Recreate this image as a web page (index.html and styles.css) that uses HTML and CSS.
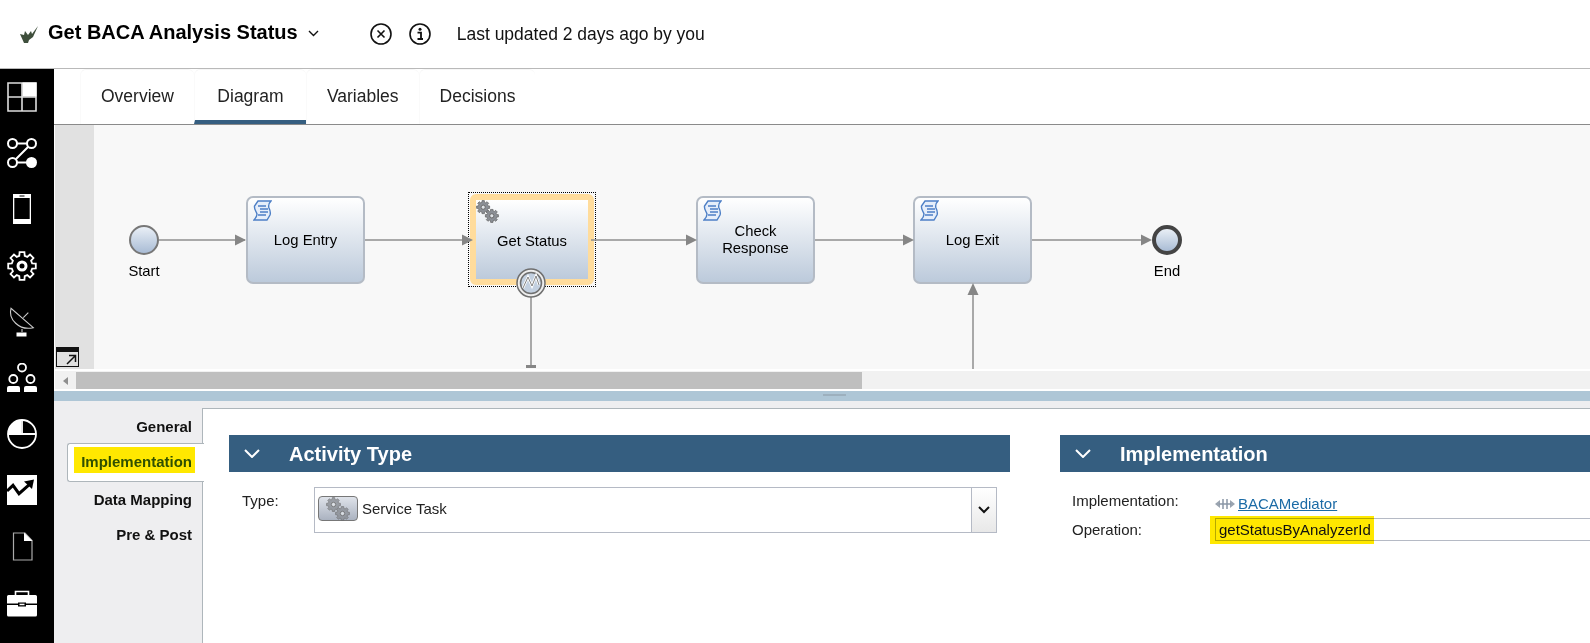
FILE: index.html
```html
<!DOCTYPE html>
<html lang="en">

<head>
    <meta charset="UTF-8">
    <title>Get BACA Analysis Status</title>
    <link rel="stylesheet" href="styles.css">
</head>

<body>
    <svg class="defs" width="0" height="0">
        <symbol id="gear" viewBox="0 0 30 30">
            <polygon points="25.14,12.28 28.79,12.57 28.79,17.43 25.14,17.72 24.09,20.25 26.47,23.03 23.03,26.47 20.25,24.09 17.72,25.14 17.43,28.79 12.57,28.79 12.28,25.14 9.75,24.09 6.97,26.47 3.53,23.03 5.91,20.25 4.86,17.72 1.21,17.43 1.21,12.57 4.86,12.28 5.91,9.75 3.53,6.97 6.97,3.53 9.75,5.91 12.28,4.86 12.57,1.21 17.43,1.21 17.72,4.86 20.25,5.91 23.03,3.53 26.47,6.97 24.09,9.75" />
        </symbol>
        <symbol id="gears" viewBox="0 0 24 24">
            <use href="#gear" x="0" y="0" width="15" height="15" fill="#8b8f96" stroke="#666" stroke-width="1.5" />
            <circle cx="7.5" cy="7.5" r="2.2" fill="#dfe3e8" stroke="#666" />
            <use href="#gear" x="9" y="9" width="15" height="15" fill="#8b8f96" stroke="#666" stroke-width="1.5" />
            <circle cx="16.5" cy="16.5" r="2.2" fill="#dfe3e8" stroke="#666" />
        </symbol>
        <symbol id="script" viewBox="0 0 19 21">
            <path d="M5 1H18C16 3 15 5 16 8C17 10 18 12 17 15L14 20H1C3 18 4 16 4 14C3 11 1 9 1.5 6Z" fill="#e6eefa" stroke="#4d7fc6" stroke-width="1.4" />
            <path d="M5 6H13M7 9H15M7 12H15M5 15H13" stroke="#4d7fc6" stroke-width="1.3" />
        </symbol>
    </svg>

    <header class="topbar">
        <svg class="app-logo" width="21" height="19" viewBox="0 0 21 19">
            <path d="M6 18L2 9L6 10L7 6L10 10L13 6L14 9L20 1L15 12L11 15L10 18Z" fill="#3f4f3c" />
        </svg>
        <h1 class="app-title">Get BACA Analysis Status</h1>
        <svg class="title-caret" width="11" height="7" viewBox="0 0 11 7">
            <path d="M1 1L5.500 5.500L10 1" fill="none" stroke="#111" stroke-width="1.4" />
        </svg>
        <svg class="round-icon first" width="22" height="22" viewBox="0 0 22 22">
            <circle cx="11" cy="11" r="10" fill="none" stroke="#111" stroke-width="1.6" />
            <path d="M7.5 7.5L14.5 14.5M14.5 7.5L7.5 14.5" stroke="#111" stroke-width="1.6" />
        </svg>
        <svg class="round-icon" width="22" height="22" viewBox="0 0 22 22">
            <circle cx="11" cy="11" r="10" fill="none" stroke="#111" stroke-width="1.6" />
            <circle cx="11" cy="6.3" r="1.5" fill="#111" />
            <path d="M8.5 9.6H12V15.8M8.5 16H14" fill="none" stroke="#111" stroke-width="1.8" />
        </svg>
        <span class="updated">Last updated 2 days ago by you</span>
    </header>

    <div class="shell">
        <nav class="rail">
            <svg class="rail-icon" viewBox="0 0 30 30">
                <path d="M1 1H29V29H1ZM15 1V29M1 15H29" fill="none" stroke="#ddd" stroke-width="1.6" />
                <rect x="15.500" y="0.500" width="14" height="14" fill="#fff" />
            </svg>
            <svg class="rail-icon" viewBox="0 0 30 30">
                <g fill="none" stroke="#fff" stroke-width="2">
                    <circle cx="5.500" cy="5.500" r="4.500" />
                    <circle cx="24.500" cy="5.500" r="4.500" />
                    <circle cx="5.500" cy="24.500" r="4.500" />
                    <path d="M10 5.500H20M21 9L9 21M10 24.500H20" />
                </g>
                <circle cx="24.500" cy="24.500" r="5.500" fill="#fff" />
            </svg>
            <svg class="rail-icon" viewBox="0 0 30 30">
                <path fill="#fff" fill-rule="evenodd" d="M6 0H24V30H6ZM7.300 4V25H22.700V4Z" />
                <rect x="12.500" y="1.500" width="5" height="1" fill="#000" />
            </svg>
            <svg class="rail-icon" viewBox="0 0 30 30">
                <use href="#gear" width="30" height="30" fill="none" stroke="#fff" stroke-width="1.8" />
                <circle cx="15" cy="15" r="4" fill="none" stroke="#fff" stroke-width="3" />
            </svg>
            <svg class="rail-icon" viewBox="0 0 30 30">
                <path d="M4 1.300C1 12 12 24 26.300 20.700Z" fill="none" stroke="#ccc" stroke-width="1.100" />
                <path d="M16.300 10.700L21.300 5.700" stroke="#ccc" stroke-width="1.100" />
                <path d="M15 22V25" stroke="#ccc" stroke-width="1.100" />
                <rect x="9.500" y="25.500" width="10" height="4" fill="#fff" />
            </svg>
            <svg class="rail-icon" viewBox="0 0 30 30">
                <g fill="none" stroke="#fff" stroke-width="1.8">
                    <circle cx="15" cy="4.500" r="4" />
                    <circle cx="6.300" cy="16" r="4" />
                    <circle cx="23.500" cy="16" r="4" />
                </g>
                <path d="M0 29V25Q0 23 2 23H11Q13 23 13 25V29ZM17 29V25Q17 23 19 23H28Q30 23 30 25V29Z" fill="#fff" />
            </svg>
            <svg class="rail-icon" viewBox="0 0 30 30">
                <circle cx="15" cy="15" r="14" fill="none" stroke="#fff" stroke-width="1.8" />
                <path d="M1 15H29M15 15V1" stroke="#fff" stroke-width="1.8" />
                <path d="M14 14V1.040A14 14 0 0 0 1.040 14Z" fill="#fff" />
            </svg>
            <svg class="rail-icon" viewBox="0 0 30 30">
                <rect width="30" height="30" fill="#fff" />
                <path d="M0 16L6 10.300L12 18.700L22 9.800" fill="none" stroke="#000" stroke-width="3" />
                <polygon points="27,4.500 17,6.500 25,14" fill="#000" />
            </svg>
            <svg class="rail-icon" viewBox="0 0 30 30">
                <path d="M6.500 1H18L25 8.500V28H6.500Z" fill="none" stroke="#aaa" stroke-width="1.200" />
                <polygon points="17,0.500 25.500,9 17,9" fill="#fff" />
            </svg>
            <svg class="rail-icon" viewBox="0 -1 30 30">
                <path d="M8.500 6V2.500H21.500V6" fill="none" stroke="#fff" stroke-width="1.600" />
                <path d="M1.500 6H28.500Q30 6 30 7.500V14.500H0V7.500Q0 6 1.500 6ZM0 16H30V26Q30 27.500 28.500 27.500H1.500Q0 27.500 0 26Z" fill="#fff" />
                <rect x="11" y="13.500" width="8" height="4" fill="#000" />
                <rect x="12.500" y="14.700" width="5" height="1.500" fill="#fff" />
            </svg>
        </nav>

        <main class="workspace">
            <div class="tabs">
                <a class="tab">Overview</a>
                <a class="tab tab-active">Diagram</a>
                <a class="tab">Variables</a>
                <a class="tab">Decisions</a>
            </div>

            <section class="canvas">
                <div class="canvas-gutter"></div>

                <svg class="wires" width="1535" height="244" viewBox="0 0 1535 244">
                    <g stroke="#8f8f8f" stroke-width="1.5" fill="none">
                        <path d="M104 115H190M310 115H410M536 115H632M760 115H850M977 115H1090" />
                        <path d="M476 172V242M918 170V244" />
                    </g>
                    <g fill="#868686">
                        <polygon points="180,109.500 191,115 180,120.500" />
                        <polygon points="407,109.500 418,115 407,120.500" />
                        <polygon points="631,109.500 642,115 631,120.500" />
                        <polygon points="848,109.500 859,115 848,120.500" />
                        <polygon points="1086,109.500 1097,115 1086,120.500" />
                        <polygon points="918,158 912.500,170 923.500,170" />
                        <rect x="471" y="240" width="10" height="3" />
                    </g>
                </svg>

                <div class="event event-start"></div>
                <span class="event-label label-start">Start</span>

                <div class="node node-log-entry">
                    <svg class="node-icon"><use href="#script" /></svg>
                    <span>Log Entry</span>
                </div>

                <div class="node-selected">
                    <div class="node node-inner">
                        <svg class="node-icon node-gears"><use href="#gears" /></svg>
                        <span>Get Status</span>
                    </div>
                </div>
                <svg class="boundary" width="30" height="30" viewBox="0 0 30 30">
                    <circle cx="15" cy="15" r="14" fill="#eee" stroke="#6f6f6f" stroke-width="1.5" />
                    <circle cx="15" cy="15" r="10.500" fill="#c3d0e0" stroke="#6f6f6f" stroke-width="1.500" />
                    <path d="M7 20L12 9L16 18L20 8L23 17" fill="none" stroke="#fff" stroke-width="2.500" />
                    <path d="M7 20L12 9L16 18L20 8L23 17" fill="none" stroke="#666" stroke-width="0.800" />
                </svg>

                <div class="node node-check">
                    <svg class="node-icon"><use href="#script" /></svg>
                    <span>Check<br>Response</span>
                </div>

                <div class="node node-log-exit">
                    <svg class="node-icon"><use href="#script" /></svg>
                    <span>Log Exit</span>
                </div>

                <div class="event event-end"></div>
                <span class="event-label label-end">End</span>

                <div class="expand-btn">
                    <svg width="12" height="11" viewBox="0 0 12 11">
                        <path d="M2 10L10 2M4 1.500H10.500V8" fill="none" stroke="#111" stroke-width="1.500" />
                    </svg>
                </div>
            </section>

            <div class="hscroll">
                <span class="hscroll-arrow"></span>
                <span class="hscroll-thumb"></span>
            </div>

            <div class="splitter"><span class="splitter-grip"></span></div>

            <section class="props">
                <div class="prop-tabs">
                    <a class="prop-tab prop-general">General</a>
                    <a class="prop-tab prop-active"><span class="marker">Implementation</span></a>
                    <a class="prop-tab prop-mapping">Data Mapping</a>
                    <a class="prop-tab">Pre &amp; Post</a>
                </div>

                <div class="prop-body">
                    <div class="panel panel-type">
                        <h2 class="panel-head">
                            <svg width="16" height="9" viewBox="0 0 16 9">
                                <path d="M1 1L8 8L15 1" fill="none" stroke="#fff" stroke-width="2" />
                            </svg>
                            Activity Type
                        </h2>
                        <div class="type-row">
                            <label class="field-label type-label">Type:</label>
                            <div class="select">
                                <span class="type-chip">
                                    <svg width="24" height="24"><use href="#gears" /></svg>
                                </span>
                                <span class="select-value">Service Task</span>
                                <span class="select-drop">
                                    <svg width="12" height="8" viewBox="0 0 12 8">
                                        <path d="M1 1L6 6L11 1" fill="none" stroke="#111" stroke-width="2" />
                                    </svg>
                                </span>
                            </div>
                        </div>
                    </div>

                    <div class="panel panel-impl">
                        <h2 class="panel-head">
                            <svg width="16" height="9" viewBox="0 0 16 9">
                                <path d="M1 1L8 8L15 1" fill="none" stroke="#fff" stroke-width="2" />
                            </svg>
                            Implementation
                        </h2>
                        <div class="impl-grid">
                            <label class="field-label impl-label">Implementation:</label>
                            <div class="impl-link">
                                <svg width="20" height="10" viewBox="0 0 20 10">
                                    <path d="M0 5L5 1V9ZM20 5L15 1V9Z" fill="#9aa4b0" />
                                    <path d="M8 0V10M12 0V10M4 5H16" stroke="#8a96a6" stroke-width="1.500" />
                                </svg>
                                <a class="link">BACAMediator</a>
                            </div>
                            <label class="field-label">Operation:</label>
                            <div class="text-input">
                                <span class="marker marker-op">getStatusByAnalyzerId</span>
                            </div>
                        </div>
                    </div>
                </div>
            </section>
        </main>
    </div>
</body>

</html>
```

FILE: styles.css
```css
html {
    background-color: white;
    font-family: "Liberation Sans", Arial, sans-serif;
}

body {
    margin: 0;
    height: 643px;
    overflow: hidden;
    color: #111;
}

.defs {
    position: absolute;
}

/* top bar */
.topbar {
    display: flex;
    align-items: center;
    height: 68px;
    border-bottom: 1px solid #b9b9b9;
}

.app-logo {
    margin-left: 18px;
    margin-right: 9px;
}

.app-title {
    margin: 0 0 4px 0;
    font-size: 20px;
    font-weight: bold;
    color: #000;
}

.title-caret {
    margin-left: 10px;
    margin-bottom: 2px;
}

.round-icon {
    margin-left: 17px;
}

.round-icon.first {
    margin-left: 51px;
}

.updated {
    margin-left: 26px;
    font-size: 17.5px;
}

.shell {
    display: flex;
    height: 574px;
}

/* left rail */
.rail {
    display: flex;
    flex-direction: column;
    gap: 26.2px;
    width: 54px;
    padding-top: 13px;
    padding-left: 7px;
    box-sizing: border-box;
    background-color: #000;
    flex-shrink: 0;
}

.rail-icon {
    width: 30px;
    height: 30px;
    flex-shrink: 0;
}

.workspace {
    display: flex;
    flex-direction: column;
    flex-grow: 1;
    min-width: 0;
}

/* tabs */
.tabs {
    display: flex;
    height: 56px;
    padding-left: 26px;
    box-sizing: border-box;
    border-bottom: 1px solid #8a8a8a;
    flex-shrink: 0;
}

.tab {
    min-width: 112px;
    padding: 16px 20px 0;
    box-sizing: border-box;
    text-align: center;
    font-size: 17.5px;
    color: #222;
    border-top: 1px solid #f6f6f6;
    border-left: 1px solid #fafafa;
    border-radius: 6px 6px 0 0;
}

.tab-active {
    border-bottom: 4px solid #355e80;
    height: 55px;
}

/* diagram */
.canvas {
    position: relative;
    height: 244px;
    margin-left: 1px;
    background-color: #f8f8f8;
    flex-shrink: 0;
}

.canvas-gutter {
    width: 39px;
    height: 100%;
    background-color: #e1e1e1;
}

.wires {
    position: absolute;
    left: 0;
    top: 0;
    z-index: 1;
}

.event {
    position: absolute;
    width: 30px;
    height: 30px;
    box-sizing: border-box;
    border-radius: 50%;
    background: linear-gradient(#e9eff6, #a9bcd5);
}

.event-start {
    left: 74px;
    top: 100px;
    border: 2px solid #777;
}

.event-end {
    left: 1097px;
    top: 100px;
    border: 4px solid #444;
}

.event-label {
    position: absolute;
    top: 138px;
    width: 60px;
    text-align: center;
    font-size: 14.8px;
    color: #000;
}

.label-start {
    left: 59px;
}

.label-end {
    left: 1082px;
}

.node {
    position: absolute;
    top: 71px;
    display: flex;
    align-items: center;
    justify-content: center;
    width: 119px;
    height: 88px;
    box-sizing: border-box;
    border: 2px solid #b4bbc5;
    border-radius: 7px;
    background: linear-gradient(#fff, #bccadb);
    font-size: 14.8px;
    line-height: 17px;
    text-align: center;
    color: #000;
}

.node-log-entry {
    left: 191px;
}

.node-check {
    left: 641px;
}

.node-log-exit {
    left: 858px;
}

.node-icon {
    position: absolute;
    left: 5px;
    top: 2px;
    width: 19px;
    height: 21px;
}

.node-gears {
    left: 0;
    top: 0;
    width: 23px;
    height: 23px;
}

.node-selected {
    position: absolute;
    left: 413px;
    top: 67px;
    width: 128px;
    height: 95px;
    box-sizing: border-box;
    padding: 1px;
    border: 1px dotted #000;
}

.node-inner {
    position: relative;
    top: 0;
    width: 100%;
    height: 100%;
    padding-top: 3px;
    border: 6px solid #ffdc9c;
    border-radius: 6px;
}

.boundary {
    position: absolute;
    left: 461px;
    top: 143px;
    z-index: 2;
}

.expand-btn {
    position: absolute;
    left: 1px;
    top: 222px;
    display: flex;
    align-items: flex-end;
    justify-content: flex-end;
    width: 23px;
    height: 20px;
    box-sizing: border-box;
    padding: 0 1px 1px 0;
    background-color: #e1e1e1;
    border: 1px solid #111;
    border-top: 5px solid #111;
}

/* horizontal scroll bar */
.hscroll {
    display: flex;
    align-items: center;
    height: 22px;
    margin-left: 1px;
    padding-top: 1px;
    box-sizing: border-box;
    background-color: #f1f1f1;
    border-top: 2px solid #fff;
    border-bottom: 2px solid #fff;
    flex-shrink: 0;
}

.hscroll-arrow {
    width: 0;
    height: 0;
    margin-left: 8px;
    border-top: 4px solid transparent;
    border-bottom: 4px solid transparent;
    border-right: 5px solid #8f8f8f;
}

.hscroll-thumb {
    width: 786px;
    height: 17px;
    margin-left: 8px;
    background-color: #bfbfbf;
}

.splitter {
    display: flex;
    justify-content: center;
    height: 10px;
    padding-left: 24px;
    box-sizing: border-box;
    background-color: #aec6d6;
    flex-shrink: 0;
}

.splitter-grip {
    width: 23px;
    height: 2px;
    margin-top: 3px;
    background-color: #9db0be;
}

/* properties */
.props {
    display: flex;
    flex-grow: 1;
    padding-top: 7px;
    background-color: #eeeef0;
    min-height: 0;
}

.prop-tabs {
    width: 148px;
    flex-shrink: 0;
    border-top: 1px solid transparent;
}

.prop-tab {
    display: block;
    height: 34px;
    box-sizing: border-box;
    padding-right: 10px;
    text-align: right;
    font-size: 15px;
    font-weight: bold;
    line-height: 34px;
    color: #111;
}

.prop-general {
    height: 34px;
    padding-top: 1px;
}

.prop-active {
    position: relative;
    z-index: 1;
    width: 137px;
    height: 39px;
    margin-left: 13px;
    padding-right: 12px;
    background-color: #fff;
    border: 1px solid #aeb6bb;
    border-right: none;
    border-radius: 3px 0 0 3px;
}

.prop-mapping {
    height: 36px;
    padding-top: 1px;
}

.marker {
    display: inline-block;
    background-color: #ffe800;
    mix-blend-mode: multiply;
}

.prop-active .marker {
    height: 26px;
    margin-top: 3px;
    margin-right: -3px;
    padding: 0 3px 0 7px;
    line-height: 30px;
    color: #2f4f00;
    vertical-align: top;
}

.prop-body {
    display: flex;
    flex-grow: 1;
    min-width: 0;
    padding: 26px 0 0 26px;
    background-color: #fff;
    border-top: 1px solid #aeb6bb;
    border-left: 1px solid #aeb6bb;
    gap: 50px;
}

.panel-type {
    width: 781px;
    flex-shrink: 0;
}

.panel-impl {
    flex-grow: 1;
    min-width: 0;
}

.panel-head {
    display: flex;
    align-items: center;
    height: 37px;
    margin: 0;
    padding: 2px 0 0 15px;
    box-sizing: border-box;
    gap: 29px;
    background-color: #355e80;
    color: white;
    font-size: 20px;
    font-weight: bold;
}

.panel-head svg {
    margin-bottom: 3px;
}

.field-label {
    font-size: 15px;
    color: #222;
}

.type-row {
    display: flex;
    margin-top: 15px;
}

.type-label {
    width: 85px;
    padding: 5px 0 0 13px;
    box-sizing: border-box;
}

.select {
    display: flex;
    align-items: center;
    width: 683px;
    height: 46px;
    box-sizing: border-box;
    border: 1px solid #b5bac5;
    padding-left: 3px;
    padding-bottom: 3px;
}

.type-chip {
    display: flex;
    align-items: center;
    justify-content: center;
    width: 40px;
    height: 25px;
    box-sizing: border-box;
    border: 1px solid #777;
    border-radius: 4px;
    background: linear-gradient(#dfe3ea, #aab2c0);
}

.type-chip svg {
    opacity: 0.8;
}

.select-value {
    flex-grow: 1;
    margin-left: 4px;
    font-size: 15px;
    color: #222;
}

.select-drop {
    display: flex;
    align-items: center;
    justify-content: center;
    align-self: stretch;
    width: 24px;
    margin-bottom: -3px;
    border-left: 1px solid #b5bac5;
    background: linear-gradient(#fff, #e8e8e8);
}

.impl-grid {
    display: grid;
    grid-template-columns: 143px 1fr;
    grid-template-rows: 29px 23px;
    align-items: center;
    margin-top: 17px;
    padding-left: 12px;
}

.impl-label {
    padding-bottom: 6px;
}

.impl-link {
    display: flex;
    align-items: center;
    gap: 3px;
}

.link {
    font-size: 15px;
    color: #1b6ba6;
    text-decoration: underline;
}

.text-input {
    display: flex;
    align-items: center;
    height: 23px;
    box-sizing: border-box;
    border: 1px solid #b5bac5;
    border-right: none;
}

.marker-op {
    height: 28px;
    margin-left: -6px;
    padding: 0 3px 0 9px;
    font-size: 15px;
    line-height: 28px;
    color: #111;
}
```
